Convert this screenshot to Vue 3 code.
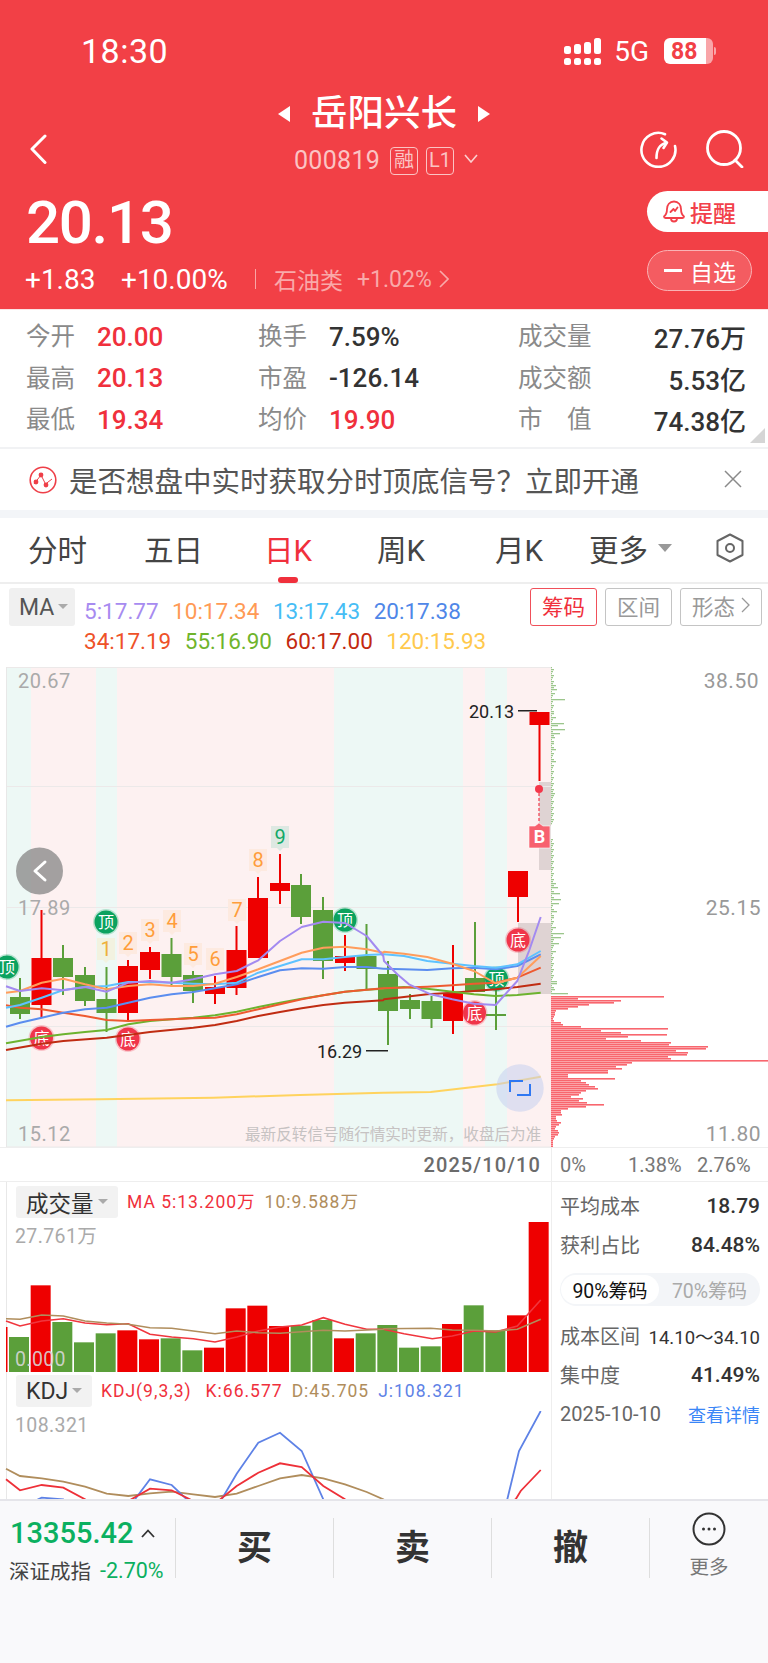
<template>
  <div class="page">
    <header class="head">
      <div class="status">
        <span class="time">18:30</span>
        <div class="status-right">
          <svg class="signal" width="38" height="27" viewBox="0 0 38 27">
            <rect v-for="b in signalBars" :key="b.x" :x="b.x" :y="b.y" width="7" :height="b.h" rx="2.5" fill="#fff" />
            <rect v-for="x in [0, 10, 20, 30]" :key="x" :x="x" y="20" width="7" height="7" rx="2.5" fill="#fff" />
          </svg>
          <span class="net">5G</span>
          <div class="battery"><span>88</span></div>
          <i class="nub"></i>
        </div>
      </div>

      <div class="nav">
        <svg class="back" width="18" height="30" viewBox="0 0 18 30"><path d="M16 2 3 15l13 13.500" fill="none" stroke="#fff" stroke-width="3" stroke-linecap="round" stroke-linejoin="round" /></svg>
        <div class="nav-center">
          <div class="title-row">
            <i class="tri-left"></i>
            <span class="title">岳阳兴长</span>
            <i class="tri-right"></i>
          </div>
          <div class="code-row">
            <span class="code">000819</span>
            <span class="code-tag">融</span>
            <span class="code-tag">L1</span>
            <svg width="14" height="9" viewBox="0 0 14 9"><path d="M1 1l6 7 6-7" fill="none" stroke="#fbd0d0" stroke-width="1.600" /></svg>
          </div>
        </div>
        <div class="nav-icons">
          <svg width="38" height="38" viewBox="0 0 38 38" fill="none" stroke="#fff" stroke-width="2.600" stroke-linecap="round" stroke-linejoin="round">
            <path d="M26 4.200A17 17 0 1 0 36 16" />
            <path d="M17.500 28c0-8 2-13 9.500-15" />
            <path d="M22.500 8.500 28 12.500l-3.500 5.500" />
          </svg>
          <svg width="38" height="38" viewBox="0 0 38 38" fill="none" stroke="#fff" stroke-width="2.800" stroke-linecap="round">
            <circle cx="18" cy="18" r="16.500" />
            <path d="m29 30 7 7" />
          </svg>
        </div>
      </div>

      <div class="quote">
        <div>
          <div class="price">20.13</div>
          <div class="change">
            <span class="chg-a">+1.83</span>
            <span class="chg-b">+10.00%</span>
            <i class="chg-line"></i>
            <span class="sector">石油类</span>
            <span class="sector-pct">+1.02%</span>
            <svg width="10" height="20" viewBox="0 0 10 20"><path d="m1 2 8 8-8 8" fill="none" stroke="#f9aaaa" stroke-width="1.600" /></svg>
          </div>
        </div>
        <div class="quote-btns">
          <div class="remind">
            <svg width="22" height="23" viewBox="0 0 22 23" fill="none" stroke="#f2404a" stroke-width="1.800" stroke-linejoin="round">
              <path d="M11 1.500c-4.500 0-7 3.500-7 7.500 0 3.500-1 6-3 7.500 0 1 .5 1.500 1.500 1.500h17c1 0 1.500-.5 1.500-1.500-2-1.500-3-4-3-7.500 0-4-2.500-7.500-7-7.500Z" />
              <path d="M8 18.500c0 2 1.200 3 3 3s3-1 3-3" />
              <path d="m7.500 12 3-3 1.500 2 2.500-3.500" stroke-linecap="round" />
            </svg>
            <span>提醒</span>
          </div>
          <div class="watch"><i class="minus"></i><span>自选</span></div>
        </div>
      </div>
    </header>

    <section class="stats">
      <template v-for="row in statRows" :key="row[0]">
        <span class="s-label">{{ row[0] }}</span>
        <span class="s-val red">{{ row[1] }}</span>
        <span class="s-label">{{ row[2] }}</span>
        <span class="s-val" :class="{ red: row[3] === '19.90' }">{{ row[3] }}</span>
        <span class="s-label">{{ row[4] }}</span>
        <span class="s-val s-right">{{ row[5] }}</span>
      </template>
      <i class="corner"></i>
    </section>

    <section class="notice">
      <svg width="28" height="28" viewBox="0 0 28 28" fill="none" stroke="#ee3f48" stroke-width="1.600">
        <circle cx="14" cy="14" r="12.800" />
        <path d="M5 18 12 9l4.500 9L23 13" stroke-width="1" />
        <circle cx="12" cy="9" r="2.400" fill="#ee3f48" stroke="none" />
        <circle cx="7" cy="16" r="2.400" fill="#ee3f48" stroke="none" />
        <circle cx="17" cy="19" r="2.400" fill="#ee3f48" stroke="none" />
      </svg>
      <span class="notice-text">是否想盘中实时获取分时顶底信号？立即开通</span>
      <svg class="notice-close" width="18" height="18" viewBox="0 0 18 18"><path d="m1 1 16 16M17 1 1 17" stroke="#8a8a8a" stroke-width="1.500" /></svg>
    </section>

    <nav class="tabs">
      <span class="tab">分时</span>
      <span class="tab">五日</span>
      <span class="tab active">日K</span>
      <span class="tab">周K</span>
      <span class="tab">月K</span>
      <span class="tab">更多<i class="tab-arrow"></i></span>
      <svg class="tab-set" width="28" height="30" viewBox="0 0 28 30" fill="none" stroke="#666" stroke-width="2">
        <path d="M14 1.500 26.500 8v14L14 28.500 1.500 22V8Z" stroke-linejoin="round" />
        <circle cx="14" cy="15" r="4" />
      </svg>
      <i class="tab-mark"></i>
    </nav>

    <section class="legend">
      <div class="ma-btn">MA<i class="mini-arrow"></i></div>
      <div class="legend-lines">
        <div class="legend-row" v-for="(row, i) in maLegend" :key="i">
          <span v-for="m in row" :key="m.t" :style="{ color: m.c }">{{ m.t }}</span>
        </div>
      </div>
      <div class="mode-btns">
        <span class="mode on">筹码</span>
        <span class="mode">区间</span>
        <span class="mode wide">形态<svg width="9" height="16" viewBox="0 0 9 16"><path d="m1 1 7 7-7 7" fill="none" stroke="#999" stroke-width="1.300" /></svg></span>
      </div>
    </section>

    <section class="chart-row">
      <svg class="main-chart" width="551" height="480" viewBox="0 666 551 480">
        <rect v-for="b in bands" :key="b.x" :x="b.x" y="666" :width="b.w" height="480" :fill="b.c" />
        <rect x="539" y="781" width="12" height="88" fill="#dfd3d3" />
        <rect x="518" y="922" width="33" height="71" fill="#dfd3d3" />
        <line v-for="y in gridYs" :key="y" x1="6" x2="551" :y1="y" :y2="y" stroke="#ece9e9" stroke-width="1" />
        <line x1="6.500" x2="6.500" y1="666" y2="1146" stroke="#e8e8e8" />

        <g v-for="c in candles" :key="c.x">
          <rect :x="c.x - 1" :y="c.hi" width="2" :height="c.lo - c.hi" :fill="c.col" />
          <rect :x="c.x - 10" :y="c.top" width="20" :height="c.bot - c.top" :fill="c.col" />
        </g>

        <g v-for="(b, i) in signals" :key="i">
          <circle :cx="b.x" :cy="b.y" r="13" :fill="b.c" fill-opacity=".25" />
          <circle :cx="b.x" :cy="b.y" r="11.500" :fill="b.c" />
          <text :x="b.x" :y="b.y + 6" class="sig-text">{{ b.t }}</text>
        </g>

        <polyline v-for="l in maLines" :key="l.c" :points="l.p" fill="none" :stroke="l.c" stroke-width="2" stroke-linejoin="round" />

        <g v-for="t in tags" :key="t.n">
          <path :d="`M${t.x} ${t.y}h18v22h-6l-3 3-3-3h-6Z`" :fill="t.bg" />
          <text :x="t.x + 9" :y="t.y + 18" class="tag-text" :fill="t.c">{{ t.n }}</text>
        </g>

        <text x="18" y="687" class="axis">20.67</text>
        <text x="18" y="914" class="axis">17.89</text>
        <text x="18" y="1140" class="axis">15.12</text>
        <text x="469" y="717" class="mark">20.13</text>
        <rect x="518" y="709" width="19" height="1.500" fill="#222" />
        <text x="317" y="1057" class="mark">16.29</text>
        <rect x="366" y="1049" width="22" height="1.500" fill="#222" />
        <text x="245" y="1139" class="tip">最新反转信号随行情实时更新，收盘后为准</text>

        <circle cx="39.500" cy="870" r="23.500" fill="#8c8c8c" fill-opacity=".8" />
        <path d="M45 861 35 870l10 9" fill="none" stroke="#fff" stroke-width="3" stroke-linecap="round" stroke-linejoin="round" />

        <circle cx="539" cy="788" r="4" fill="#f4374a" />
        <line x1="539" x2="539" y1="792" y2="824" stroke="#f4374a" stroke-width="1.200" stroke-dasharray="3 2" />
        <path d="M529 825h6l4-3 4 3h7v22h-21Z" fill="#f7616f" stroke="#fff" stroke-width=".6" />
        <text x="539.500" y="842" class="b-text">B</text>

        <circle cx="520" cy="1087" r="23.700" fill="#c6cfee" fill-opacity=".55" />
        <path d="M510 1091v-11h13M530 1083v11h-13" fill="none" stroke="#2f78f2" stroke-width="2" />
      </svg>
      <svg class="profile" width="217" height="480" viewBox="551 666 217 480">
        <rect v-for="b in greenProfile" :key="b.y" x="551" :y="b.y" :width="b.w" height="1.300" fill="#9cc68c" />
        <rect v-for="b in redProfile" :key="b.y" x="551" :y="b.y" :width="b.w" height="1.600" fill="#f8666e" />
        <text x="759" y="687" class="axis end">38.50</text>
        <text x="761" y="914" class="axis end">25.15</text>
        <text x="761" y="1140" class="axis end">11.80</text>
      </svg>
    </section>

    <section class="date-row">
      <div class="date-left">2025/10/10</div>
      <div class="date-right">
        <span>0%</span>
        <span>1.38%</span>
        <span>2.76%</span>
      </div>
    </section>

    <section class="lower">
      <div class="lower-left">
        <div class="sub-head">
          <div class="sub-btn vol">成交量<i class="mini-arrow"></i></div>
          <span class="sub-text red">MA 5:13.200万</span>
          <span class="sub-text tan">10:9.588万</span>
        </div>
        <svg class="vol-chart" width="551" height="151" viewBox="0 1221 551 151">
          <line x1="6.500" x2="6.500" y1="1221" y2="1372" stroke="#e8e8e8" />
          <rect x="6" y="1326" width="1.500" height="45" fill="#ee0000" />
          <rect v-for="b in volBars" :key="b.x" :x="b.x" :y="b.y" width="20" :height="1371 - b.y" :fill="b.col" />
          <polyline v-for="l in volLines" :key="l.c" :points="l.p" fill="none" :stroke="l.c" stroke-width="1.600" />
          <text x="15" y="1242" class="axis small">27.761万</text>
          <text x="15" y="1365" class="axis small faded">0.000</text>
        </svg>
        <div class="sub-head kdj-head">
          <div class="sub-btn kdj">KDJ<i class="mini-arrow"></i></div>
          <span class="sub-text red kdj-name">KDJ(9,3,3)</span>
          <span class="sub-text red">K:66.577</span>
          <span class="sub-text tan">D:45.705</span>
          <span class="sub-text blue">J:108.321</span>
        </div>
        <svg class="kdj-chart" width="551" height="88" viewBox="0 1410 551 88">
          <line x1="6.500" x2="6.500" y1="1410" y2="1498" stroke="#e8e8e8" />
          <polyline v-for="l in kdjLines" :key="l.c" :points="l.p" fill="none" :stroke="l.c" stroke-width="1.800" />
          <text x="15" y="1431" class="axis small">108.321</text>
        </svg>
      </div>

      <aside class="side">
        <div class="side-row"><span>平均成本</span><b>18.79</b></div>
        <div class="side-row"><span>获利占比</span><b>84.48%</b></div>
        <div class="toggle">
          <span class="toggle-on">90%筹码</span>
          <span class="toggle-off">70%筹码</span>
        </div>
        <div class="side-row range"><span>成本区间</span><b>14.10～34.10</b></div>
        <div class="side-row"><span>集中度</span><b>41.49%</b></div>
        <div class="side-row foot"><span>2025-10-10</span><a>查看详情</a></div>
      </aside>
    </section>

    <footer class="bar">
      <div class="index">
        <div class="index-top"><span class="index-num">13355.42</span><svg width="14" height="9" viewBox="0 0 14 9"><path d="m1 8 6-6.500L13 8" fill="none" stroke="#333" stroke-width="1.800" /></svg></div>
        <div class="index-bot"><span class="index-name">深证成指</span><span class="index-pct">-2.70%</span></div>
      </div>
      <div class="act">买</div>
      <div class="act">卖</div>
      <div class="act">撤</div>
      <div class="more">
        <svg width="34" height="34" viewBox="0 0 34 34"><circle cx="17" cy="17" r="15.500" fill="none" stroke="#333" stroke-width="2" /><circle cx="11.500" cy="17" r="1.500" fill="#333" /><circle cx="17" cy="17" r="1.500" fill="#333" /><circle cx="22.500" cy="17" r="1.500" fill="#333" /></svg>
        <span>更多</span>
      </div>
    </footer>
  </div>
</template>

<script setup>
const RED = '#ee0000'
const GREEN = '#5b9f3a'

const signalBars = [
  { x: 0, y: 8, h: 8 },
  { x: 10, y: 6, h: 10 },
  { x: 20, y: 4, h: 12 },
  { x: 30, y: 0, h: 16 },
]

const statRows = [
  ['今开', '20.00', '换手', '7.59%', '成交量', '27.76万'],
  ['最高', '20.13', '市盈', '-126.14', '成交额', '5.53亿'],
  ['最低', '19.34', '均价', '19.90', '市　值', '74.38亿'],
]

const maLegend = [
  [
    { t: '5:17.77', c: '#a78bf0' },
    { t: '10:17.34', c: '#ff9a55' },
    { t: '13:17.43', c: '#46bdf5' },
    { t: '20:17.38', c: '#4f87e8' },
  ],
  [
    { t: '34:17.19', c: '#ee5228' },
    { t: '55:16.90', c: '#6fb42c' },
    { t: '60:17.00', c: '#c32a10' },
    { t: '120:15.93', c: '#ffc94d' },
  ],
]

const bands = [
  { x: 6, w: 25, c: '#edf8f5' },
  { x: 31, w: 65, c: '#fdf1f1' },
  { x: 96, w: 21, c: '#edf8f5' },
  { x: 117, w: 217, c: '#fdf1f1' },
  { x: 334, w: 129, c: '#edf8f5' },
  { x: 463, w: 22, c: '#fdf1f1' },
  { x: 485, w: 22, c: '#edf8f5' },
  { x: 507, w: 44, c: '#fdf1f1' },
]
const gridYs = [666.5, 785.5, 906.5, 1025.5, 1146]

// [center, high, bodyTop, bodyBottom, low, up?]
const candles = [
  [20, 977, 996, 1013, 1018, 0],
  [41.5, 909, 957, 1004, 1016, 1],
  [63, 944, 957, 976, 994, 0],
  [85, 966, 974, 1000, 1005, 0],
  [106.5, 966, 998, 1012, 1031, 0],
  [128, 959, 965, 1012, 1019, 1],
  [150, 946, 951, 969, 978, 1],
  [171.5, 937, 953, 976, 984, 0],
  [193, 970, 974, 990, 1002, 0],
  [215, 975, 986, 993, 1003, 1],
  [236.5, 925, 949, 987, 994, 1],
  [258, 876, 897, 957, 957, 1],
  [280, 853, 882, 890, 903, 1],
  [301, 873, 884, 916, 923, 0],
  [323, 896, 909, 960, 978, 0],
  [345, 934, 955, 962, 970, 1],
  [366.5, 923, 955, 968, 988, 0],
  [388, 960, 973, 1010, 1044, 0],
  [410, 993, 999, 1008, 1018, 0],
  [431.5, 995, 1000, 1018, 1027, 0],
  [453, 944, 992, 1020, 1033, 1],
  [475, 921, 977, 991, 991, 0],
  [496, 980, 1013, 1015, 1029, 0],
  [518, 870, 870, 896, 921, 1],
  [539.5, 711, 711, 724, 780, 1],
].map(([x, hi, top, bot, lo, up]) => ({ x, hi, top, bot, lo, col: up ? RED : GREEN }))

const signals = [
  { x: 7, y: 966, t: '顶', c: '#0ba25f' },
  { x: 106, y: 921, t: '顶', c: '#0ba25f' },
  { x: 345, y: 919, t: '顶', c: '#0ba25f' },
  { x: 496.5, y: 978, t: '顶', c: '#0ba25f' },
  { x: 41.5, y: 1037, t: '底', c: '#f0354a' },
  { x: 128, y: 1038, t: '底', c: '#f0354a' },
  { x: 474.5, y: 1012, t: '底', c: '#f0354a' },
  { x: 518, y: 939, t: '底', c: '#f0354a' },
]

const tagOrange = { c: '#ff9d3a', bg: '#fdeae0' }
const tags = [
  { x: 97, y: 937, n: '1', c: '#eeb03a', bg: '#f2f2e0' },
  { x: 119, y: 931, n: '2', ...tagOrange },
  { x: 141, y: 918, n: '3', ...tagOrange },
  { x: 163, y: 909, n: '4', ...tagOrange },
  { x: 184, y: 942, n: '5', ...tagOrange },
  { x: 206, y: 947, n: '6', ...tagOrange },
  { x: 228, y: 898, n: '7', ...tagOrange },
  { x: 249, y: 848, n: '8', ...tagOrange },
  { x: 271, y: 825, n: '9', c: '#14a868', bg: '#dde8e2' },
]

// points read off the reference in 3x crop coordinates
const toPts = (a, ox, oy) => {
  const out = []
  for (let i = 0; i < a.length; i += 2) out.push(`${(ox + a[i] / 3).toFixed(1)},${(oy + a[i + 1] / 3).toFixed(1)}`)
  return out.join(' ')
}
const mainLine = (c, left, right) => ({ c, p: toPts(left, 0, 900) + ' ' + toPts(right, 384, 950) })

const maLines = [
  mainLine('#ffd35e', [18, 598, 300, 595, 640, 590, 900, 582, 1150, 575], [0, 425, 140, 423, 340, 400, 470, 377]),
  mainLine('#c02c12', [18, 447, 125, 428, 190, 420, 320, 410, 450, 393, 580, 380, 645, 372, 710, 360, 775, 345, 840, 333, 905, 322, 970, 312, 1035, 305, 1150, 298], [0, 145, 60, 138, 130, 130, 205, 125, 270, 120, 335, 115, 400, 108, 470, 98]),
  mainLine('#6db32f', [18, 427, 125, 408, 190, 400, 255, 393, 320, 387, 385, 370, 450, 360, 515, 355, 580, 350, 645, 343, 710, 332, 775, 318, 840, 305, 905, 293, 970, 283, 1035, 272, 1100, 266, 1150, 263], [0, 112, 60, 108, 130, 113, 205, 122, 270, 130, 335, 135, 400, 132, 470, 125]),
  mainLine('#ee5a30', [18, 313, 60, 320, 125, 325, 190, 335, 255, 345, 320, 357, 385, 360, 450, 357, 515, 355, 580, 352, 645, 350, 710, 340, 775, 325, 840, 310, 905, 295, 970, 283, 1035, 272, 1100, 266, 1150, 262], [0, 112, 130, 107, 205, 103, 270, 98, 335, 95, 400, 80, 470, 50]),
  mainLine('#5b8def', [18, 377, 60, 365, 125, 350, 190, 335, 255, 325, 320, 320, 385, 305, 450, 290, 515, 280, 580, 273, 645, 262, 710, 250, 775, 228, 840, 208, 905, 202, 970, 203, 1035, 198, 1100, 198, 1150, 203], [0, 53, 60, 55, 130, 57, 205, 52, 270, 50, 335, 55, 400, 45, 470, 10]),
  mainLine('#5ec2ff', [18, 320, 60, 312, 125, 290, 190, 267, 255, 258, 320, 255, 385, 243, 450, 243, 515, 245, 580, 248, 645, 250, 710, 245, 775, 215, 840, 195, 905, 175, 970, 175, 1035, 168, 1100, 162, 1150, 160], [0, 10, 60, 15, 130, 30, 205, 38, 270, 45, 335, 50, 400, 40, 470, 0]),
  mainLine('#ff9d5c', [18, 275, 60, 270, 125, 245, 190, 233, 255, 250, 320, 265, 385, 255, 450, 250, 515, 255, 580, 255, 645, 248, 710, 228, 775, 205, 840, 180, 905, 155, 970, 140, 1035, 137, 1100, 145, 1150, 155], [0, 2, 60, 8, 130, 18, 205, 38, 270, 60, 335, 97, 400, 80, 470, 15]),
  mainLine('#a38af0', [18, 256, 60, 270, 125, 262, 190, 268, 255, 258, 320, 272, 385, 245, 450, 240, 515, 245, 580, 235, 645, 220, 710, 210, 775, 178, 840, 120, 905, 78, 970, 62, 1035, 66, 1100, 105, 1150, 165], [0, 30, 40, 70, 75, 100, 140, 130, 205, 145, 270, 158, 335, 162, 400, 90, 435, 0, 470, -102]),
]

// distribution bars, one length per 2px row
const redW = [113, 27, 70, 63, 38, 27, 17, 5, 4, 4, 3, 2, 3, 10, 12, 30, 117, 50, 70, 116, 77, 55, 90, 120, 118, 157, 155, 125, 137, 136, 117, 120, 217, 81, 76, 65, 71, 57, 57, 17, 17, 64, 30, 35, 38, 44, 47, 35, 30, 28, 20, 32, 28, 36, 53, 35, 17, 10, 10, 11, 5, 5, 6, 10, 8, 5, 4, 7, 8, 7, 4, 3, 2, 2, 2, 2]
const redProfile = redW.map((w, i) => ({ y: 995 + i * 2, w }))

const greenPeaks = { 680: 3, 684: 5, 688: 6, 692: 4, 698: 14, 712: 3, 716: 5, 722: 13, 724: 7, 728: 14, 732: 9, 736: 4, 742: 3, 748: 5, 760: 5, 792: 4, 878: 3, 882: 5, 886: 7, 892: 9, 898: 10, 902: 8, 910: 6, 916: 3, 926: 5, 932: 13, 936: 10, 942: 8, 950: 5, 956: 3, 980: 6, 982: 6, 988: 4, 992: 17 }
const greenProfile = []
for (let y = 666; y < 994; y += 2) {
  if (y >= 824 && y < 838) continue
  greenProfile.push({ y, w: greenPeaks[y] || 1 + ((y * 7) % 3) })
}

const volTops = [
  [27, 498, 0], [92, 343, 1], [157, 453, 0], [222, 514, 0], [287, 487, 0], [352, 478, 1], [417, 505, 1], [482, 502, 0],
  [547, 538, 0], [612, 530, 1], [677, 412, 1], [742, 404, 1], [807, 465, 1], [872, 464, 0], [937, 447, 0], [1002, 502, 1],
  [1067, 487, 0], [1132, 462, 0], [1197, 530, 0], [1262, 526, 0], [1326, 459, 1], [1391, 403, 0], [1456, 478, 0], [1521, 433, 1], [1586, 149, 1],
]
const volBars = volTops.map(([x, y, up]) => ({ x: x / 3, y: 1170 + y / 3, col: up ? RED : GREEN }))

const lowLine = (c, left, right) => ({ c, p: toPts(left, 0, 1170) + ' ' + toPts(right, 384, 1170) })
const volLines = [
  lowLine('#f0363e', [18, 450, 60, 465, 125, 450, 190, 443, 255, 456, 320, 461, 385, 458, 450, 490, 515, 498, 580, 503, 645, 513, 710, 498, 775, 480, 840, 468, 905, 462, 970, 440, 1035, 460, 1100, 475, 1150, 475], [60, 488, 145, 503, 205, 495, 270, 480, 335, 483, 400, 465, 470, 387]),
  lowLine('#b08d5c', [18, 443, 60, 445, 125, 432, 190, 435, 255, 450, 320, 456, 385, 460, 450, 470, 515, 472, 580, 480, 645, 488, 710, 480, 775, 485, 840, 487, 905, 482, 970, 478, 1035, 480, 1150, 475], [0, 473, 140, 472, 205, 477, 270, 478, 335, 480, 400, 475, 470, 445]),
]
const kdjLines = [
  lowLine('#b08d5c', [18, 893, 60, 915, 125, 922, 190, 932, 255, 947, 320, 968, 385, 975, 450, 967, 515, 962, 580, 970, 645, 978, 710, 968, 775, 945, 840, 922, 905, 912, 970, 922, 1035, 940, 1100, 963, 1150, 985], [0, 1020, 470, 1020]),
  lowLine('#5e82e6', [60, 1010, 125, 980, 190, 985, 250, 1040, 350, 1040, 405, 985, 450, 925, 515, 942, 560, 985, 610, 1040, 665, 985, 710, 908, 775, 815, 840, 785, 905, 840, 970, 985, 1030, 1040], [300, 1040, 370, 985, 405, 840, 470, 720]),
  lowLine('#ee3038', [18, 925, 60, 958, 125, 942, 190, 950, 255, 985, 320, 1020, 385, 990, 450, 953, 515, 958, 580, 990, 630, 1010, 710, 945, 775, 905, 840, 877, 905, 888, 970, 945, 1035, 985, 1100, 1020], [300, 1020, 395, 985, 410, 960, 470, 897]),
]
</script>

<style>
html, body { margin: 0; background: #fff; }
</style>

<style scoped>
.page {
  width: 768px;
  height: 1663px;
  overflow: hidden;
  display: flex;
  flex-direction: column;
  font-family: Roboto, "Noto Sans CJK SC", sans-serif;
  background: #fff;
  color: #333;
}
i { display: block; font-style: normal; }

.head {
  height: 310px;
  flex: none;
  background: #f24046;
  color: #fff;
  box-sizing: border-box;
  border-bottom: 1px solid #fbe4e4;
}
.status {
  height: 78px;
  padding-top: 12px;
  display: flex;
  align-items: center;
  justify-content: space-between;
}
.time { margin-left: 81px; font-size: 34px; letter-spacing: .5px; }
.status-right { display: flex; align-items: center; margin-right: 52px; }
.net { margin-left: 12px; font-size: 28px; }
.battery {
  margin-left: 15px;
  width: 49px;
  height: 26px;
  border-radius: 6px;
  background: linear-gradient(90deg, #fff 86%, #f9a5a8 86%);
  display: flex;
  align-items: center;
  padding-left: 7px;
  box-sizing: border-box;
  color: #f24046;
  font-size: 23px;
  font-weight: 700;
}
.nub { width: 2px; height: 8px; margin-left: 1px; background: #f9a5a8; border-radius: 0 2px 2px 0; }

.nav { height: 88px; position: relative; display: flex; align-items: center; justify-content: space-between; }
.back { margin: 30px 0 0 29px; }
.nav-center { position: absolute; left: 278px; top: 2px; }
.title-row { display: flex; align-items: center; height: 44px; }
.tri-left, .tri-right { width: 0; height: 0; border-top: 8.500px solid transparent; border-bottom: 8.500px solid transparent; }
.tri-left { border-right: 12px solid #fff; margin-right: 21px; }
.tri-right { border-left: 12px solid #fff; margin-left: 21px; }
.title { font-size: 36.500px; line-height: 44px; font-weight: 500; }
.code-row { display: flex; align-items: center; margin: 10px 0 0 16px; color: #fbc4c4; }
.code { font-size: 25px; line-height: 29px; letter-spacing: .3px; width: 96px; }
.code-tag {
  height: 28px;
  min-width: 28px;
  margin-right: 8px;
  box-sizing: border-box;
  border: 1px solid #fbc4c4;
  border-radius: 4px;
  font-size: 20px;
  line-height: 25px;
  text-align: center;
}
.code-tag + svg { margin: 0 0 4px 2px; }
.nav-icons { display: flex; gap: 29px; margin: 30px 24px 0 0; }

.quote { height: 131px; display: flex; justify-content: space-between; }
.price { margin: 11px 0 0 26px; font-size: 60px; line-height: 68px; font-weight: 500; letter-spacing: -1.300px; }
.change { display: flex; align-items: center; margin: 7px 0 0 25px; height: 30px; }
.chg-a { font-size: 28px; width: 96px; }
.chg-b { font-size: 28px; width: 134px; }
.chg-line { width: 1px; height: 20px; background: #f9a5a5; margin-right: 18px; }
.sector { font-size: 23px; color: #f9a9a9; width: 83px; }
.sector-pct { font-size: 23px; color: #f9a9a9; width: 82px; }
.quote-btns { width: 121px; padding-top: 13px; }
.remind {
  height: 41px;
  background: #fff;
  border-radius: 21px 0 0 21px;
  display: flex;
  align-items: center;
  padding-left: 16px;
  gap: 5px;
  color: #f2404a;
  font-size: 23px;
  font-weight: 500;
}
.watch {
  margin-top: 18px;
  width: 105px;
  height: 41px;
  box-sizing: border-box;
  border: 1px solid #f9b3b5;
  border-radius: 21px;
  background: rgba(255, 255, 255, .15);
  display: flex;
  align-items: center;
  padding-left: 16px;
  gap: 8px;
  font-size: 23px;
}
.minus { width: 18px; height: 3px; background: #fff; }

.stats {
  height: 139px;
  flex: none;
  box-sizing: border-box;
  padding: 6px 0 0 26px;
  position: relative;
  display: grid;
  grid-template-columns: 71px 161px 71px 189px 120px 108px;
  grid-auto-rows: 41.500px;
  align-items: center;
  border-bottom: 2px solid #f1f2f4;
}
.s-label { font-size: 24.500px; color: #8a8a8a; white-space: nowrap; margin-top: -4px; }
.s-val { font-size: 26px; font-weight: 500; color: #333; white-space: nowrap; }
.s-right { text-align: right; }
.red { color: #f0303c; }
.corner {
  position: absolute;
  right: 3px;
  bottom: 4px;
  width: 0;
  height: 0;
  border-left: 15px solid transparent;
  border-bottom: 15px solid #d5d5d5;
}

.notice {
  height: 61px;
  flex: none;
  box-sizing: border-box;
  display: flex;
  align-items: center;
  padding-left: 29px;
  position: relative;
}
.notice-text { margin-left: 12px; font-size: 28.500px; color: #555; white-space: nowrap; }
.notice-close { position: absolute; left: 724px; top: 21px; }

.tabs {
  flex: none;
  height: 74px;
  box-sizing: border-box;
  border-top: 8px solid #f3f5f8;
  border-bottom: 2px solid #eeeeee;
  display: grid;
  grid-template-columns: 116px 120px 113px 118px 94px 127px 1fr;
  padding: 0 0 4px 28px;
  align-items: center;
  position: relative;
}
.tab { font-size: 29.500px; color: #444; white-space: nowrap; display: flex; align-items: center; }
.tab.active { color: #f0303c; }
.tab-mark {
  position: absolute;
  left: 278px;
  top: 59px;
  width: 20px;
  height: 6px;
  border-radius: 3px;
  background: #f0303c;
}
.tab-arrow { width: 0; height: 0; margin-left: 10px; border-left: 7px solid transparent; border-right: 7px solid transparent; border-top: 8px solid #999; }

.legend { flex: none; height: 83px; display: flex; position: relative; box-sizing: border-box; padding-top: 4px; }
.ma-btn {
  margin-left: 9px;
  width: 66px;
  height: 38px;
  border-radius: 3px;
  background: #f0f0f0;
  display: flex;
  align-items: center;
  padding-left: 10px;
  box-sizing: border-box;
  font-size: 23px;
  color: #555;
}
.mini-arrow { width: 0; height: 0; margin-left: 4px; margin-top: -2px; border-left: 5px solid transparent; border-right: 5px solid transparent; border-top: 5px solid #aaa; }
.legend-lines { margin-left: 9px; padding-top: 8px; }
.legend-row { display: flex; gap: 13.500px; height: 30px; align-items: center; font-size: 22.500px; white-space: nowrap; }
.mode-btns { position: absolute; left: 530px; top: 4px; display: flex; gap: 8px; }
.mode {
  width: 67px;
  height: 38px;
  box-sizing: border-box;
  border: 1px solid #c4c4c4;
  border-radius: 3px;
  color: #999;
  font-size: 21.500px;
  padding-bottom: 4px;
  display: flex;
  align-items: center;
  justify-content: center;
  gap: 6px;
}
.mode.on { color: #f0303c; border-color: #f0505a; }
.mode.wide { width: 82px; }

.chart-row { flex: none; height: 480px; display: flex; }
.main-chart, .profile, .vol-chart, .kdj-chart { display: block; flex: none; }
.axis { font-size: 20px; fill: #aaa; letter-spacing: .5px; }
.axis.end { text-anchor: end; fill: #999; font-size: 21px; }
.axis.small { font-size: 19.500px; letter-spacing: .4px; }
.axis.faded { fill: #d8d8d8; fill-opacity: .9; }
.mark { font-size: 18px; fill: #222; }
.tip { font-size: 15.600px; fill: #c6c2c2; }
.sig-text { font-size: 16px; fill: #fff; text-anchor: middle; }
.tag-text { font-size: 20px; text-anchor: middle; }
.b-text { font-size: 18px; font-weight: 700; fill: #fff; text-anchor: middle; }

.date-row { flex: none; height: 35px; display: flex; border-top: 1px solid #eeeeee; border-bottom: 1px solid #eeeeee; box-sizing: border-box; }
.date-left {
  width: 551px;
  box-sizing: border-box;
  padding-right: 10px;
  text-align: right;
  line-height: 34px;
  font-size: 20px;
  font-weight: 500;
  letter-spacing: 1.100px;
  color: #6b6b6b;
}
.date-right { flex: 1; border-left: 1px solid #eeeeee; font-size: 20px; color: #777; line-height: 34px; display: grid; grid-template-columns: 68px 69px 1fr; padding-left: 8px; }

.lower { flex: none; height: 317px; display: flex; overflow: hidden; }
.lower-left { width: 551px; flex: none; }
.sub-head { height: 40px; box-sizing: border-box; padding: 4px 0 0 16px; display: flex; align-items: flex-start; position: relative; }
.sub-head::before { content: ""; position: absolute; left: 6px; top: 0; bottom: 0; width: 1px; background: #e8e8e8; }
.sub-btn {
  height: 32px;
  box-sizing: border-box;
  border-radius: 3px;
  background: #f2f2f2;
  display: flex;
  align-items: center;
  padding-left: 10px;
  color: #333;
  font-size: 22.500px;
}
.sub-btn.vol { width: 102px; margin-right: 9px; }
.sub-btn.kdj { width: 76px; margin-right: 9px; font-size: 23px; }
.sub-text { font-size: 17.500px; line-height: 33px; letter-spacing: 1px; margin-right: 9px; white-space: nowrap; }
.kdj-name { margin-right: 14px; }
.kdj-head { height: 38px; padding-top: 2px; }
.tan { color: #b08d5c; }
.blue { color: #5e82e6; }

.side { flex: 1; box-sizing: border-box; border-left: 1px solid #eeeeee; padding: 4px 8px 0 8px; }
.side-row { display: flex; justify-content: space-between; align-items: center; height: 39px; font-size: 20px; color: #666; white-space: nowrap; }
.side-row b { font-size: 21px; font-weight: 500; color: #333; }
.toggle {
  margin: 9px 0 10px;
  height: 33px;
  border-radius: 17px;
  background: #f3f5f8;
  display: flex;
  align-items: center;
  font-size: 19.500px;
}
.toggle-on { width: 98px; height: 29px; margin-left: 1px; border-radius: 15px; background: #fff; color: #111; display: flex; align-items: center; justify-content: center; }
.toggle-off { flex: 1; color: #aaa; text-align: center; }
.range b { font-size: 18.500px; font-weight: 400; }
.foot { font-size: 20px; }
.foot a { color: #3a86f7; font-size: 18px; }

.bar {
  flex: none;
  height: 165px;
  box-sizing: border-box;
  border-top: 2px solid #e5e5ea;
  background: #f9f9fb;
  display: flex;
  padding-top: 17px;
  align-items: flex-start;
}
.index { width: 176px; flex: none; height: 60px; box-sizing: border-box; padding-left: 9px; border-right: 1px solid #dedede; }
.index-top { display: flex; align-items: center; height: 28px; gap: 8px; margin-top: 1px; }
.index-num { font-size: 29px; font-weight: 500; color: #0bb060; margin-left: 1px; }
.index-bot { display: flex; align-items: center; margin-top: 8px; white-space: nowrap; }
.index-name { font-size: 20.500px; color: #444; width: 91px; }
.index-pct { font-size: 21.500px; color: #0bb060; }
.act {
  width: 158px;
  flex: none;
  height: 60px;
  box-sizing: border-box;
  border-right: 1px solid #dedede;
  text-align: center;
  line-height: 62px;
  font-size: 35px;
  font-weight: 700;
  color: #333;
}
.more { flex: 1; display: flex; flex-direction: column; align-items: center; margin-top: -6px; color: #777; font-size: 19.500px; }
.more span { margin-top: 8px; line-height: 27px; }
</style>
